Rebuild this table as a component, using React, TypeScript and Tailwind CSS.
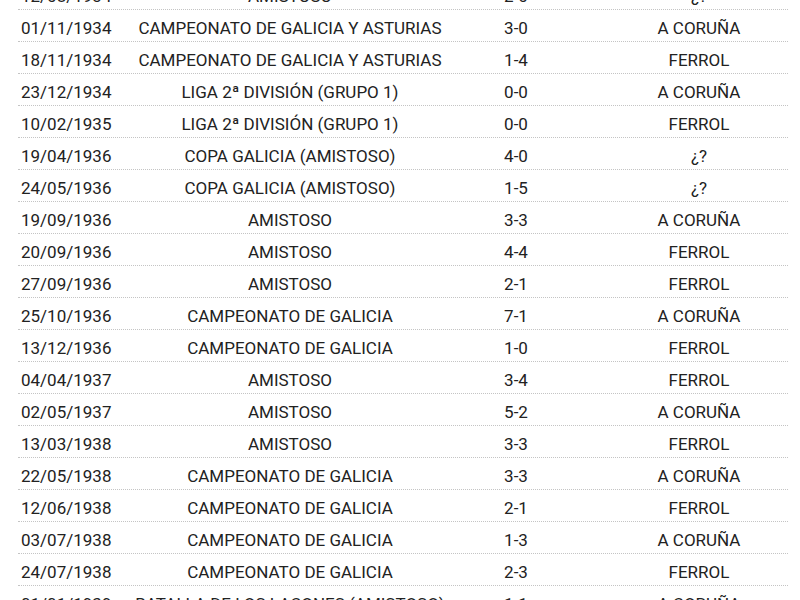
import React from 'react';

const matches = [
  { date: "12/08/1934", comp: "AMISTOSO", score: "2-0", place: "¿?" },
  { date: "01/11/1934", comp: "CAMPEONATO DE GALICIA Y ASTURIAS", score: "3-0", place: "A CORUÑA" },
  { date: "18/11/1934", comp: "CAMPEONATO DE GALICIA Y ASTURIAS", score: "1-4", place: "FERROL" },
  { date: "23/12/1934", comp: "LIGA 2ª DIVISIÓN (GRUPO 1)", score: "0-0", place: "A CORUÑA" },
  { date: "10/02/1935", comp: "LIGA 2ª DIVISIÓN (GRUPO 1)", score: "0-0", place: "FERROL" },
  { date: "19/04/1936", comp: "COPA GALICIA (AMISTOSO)", score: "4-0", place: "¿?" },
  { date: "24/05/1936", comp: "COPA GALICIA (AMISTOSO)", score: "1-5", place: "¿?" },
  { date: "19/09/1936", comp: "AMISTOSO", score: "3-3", place: "A CORUÑA" },
  { date: "20/09/1936", comp: "AMISTOSO", score: "4-4", place: "FERROL" },
  { date: "27/09/1936", comp: "AMISTOSO", score: "2-1", place: "FERROL" },
  { date: "25/10/1936", comp: "CAMPEONATO DE GALICIA", score: "7-1", place: "A CORUÑA" },
  { date: "13/12/1936", comp: "CAMPEONATO DE GALICIA", score: "1-0", place: "FERROL" },
  { date: "04/04/1937", comp: "AMISTOSO", score: "3-4", place: "FERROL" },
  { date: "02/05/1937", comp: "AMISTOSO", score: "5-2", place: "A CORUÑA" },
  { date: "13/03/1938", comp: "AMISTOSO", score: "3-3", place: "FERROL" },
  { date: "22/05/1938", comp: "CAMPEONATO DE GALICIA", score: "3-3", place: "A CORUÑA" },
  { date: "12/06/1938", comp: "CAMPEONATO DE GALICIA", score: "2-1", place: "FERROL" },
  { date: "03/07/1938", comp: "CAMPEONATO DE GALICIA", score: "1-3", place: "A CORUÑA" },
  { date: "24/07/1938", comp: "CAMPEONATO DE GALICIA", score: "2-3", place: "FERROL" },
  { date: "01/01/1939", comp: "BATALLA DE LOS LACONES (AMISTOSO)", score: "1-1", place: "A CORUÑA" },
];

const App = () => {
  return (
    <div className="w-[800px] h-[600px] overflow-hidden bg-white font-['Roboto',sans-serif] text-[17px] text-[#222]">
      <div className="ml-[18px] w-[770px] -mt-[22px]">
        {matches.map((m, i) => (
          <div
            key={i}
            className="grid grid-cols-[112px_320px_132px_1fr] items-center h-[32px] pt-[5px] border-b border-dotted border-[#c4c4c4] leading-none"
          >
            <div className="pl-[3px]">{m.date}</div>
            <div className="text-center">{m.comp}</div>
            <div className="text-center">{m.score}</div>
            <div className="text-center pl-[28px]">{m.place}</div>
          </div>
        ))}
      </div>
    </div>
  );
};

export default App;
